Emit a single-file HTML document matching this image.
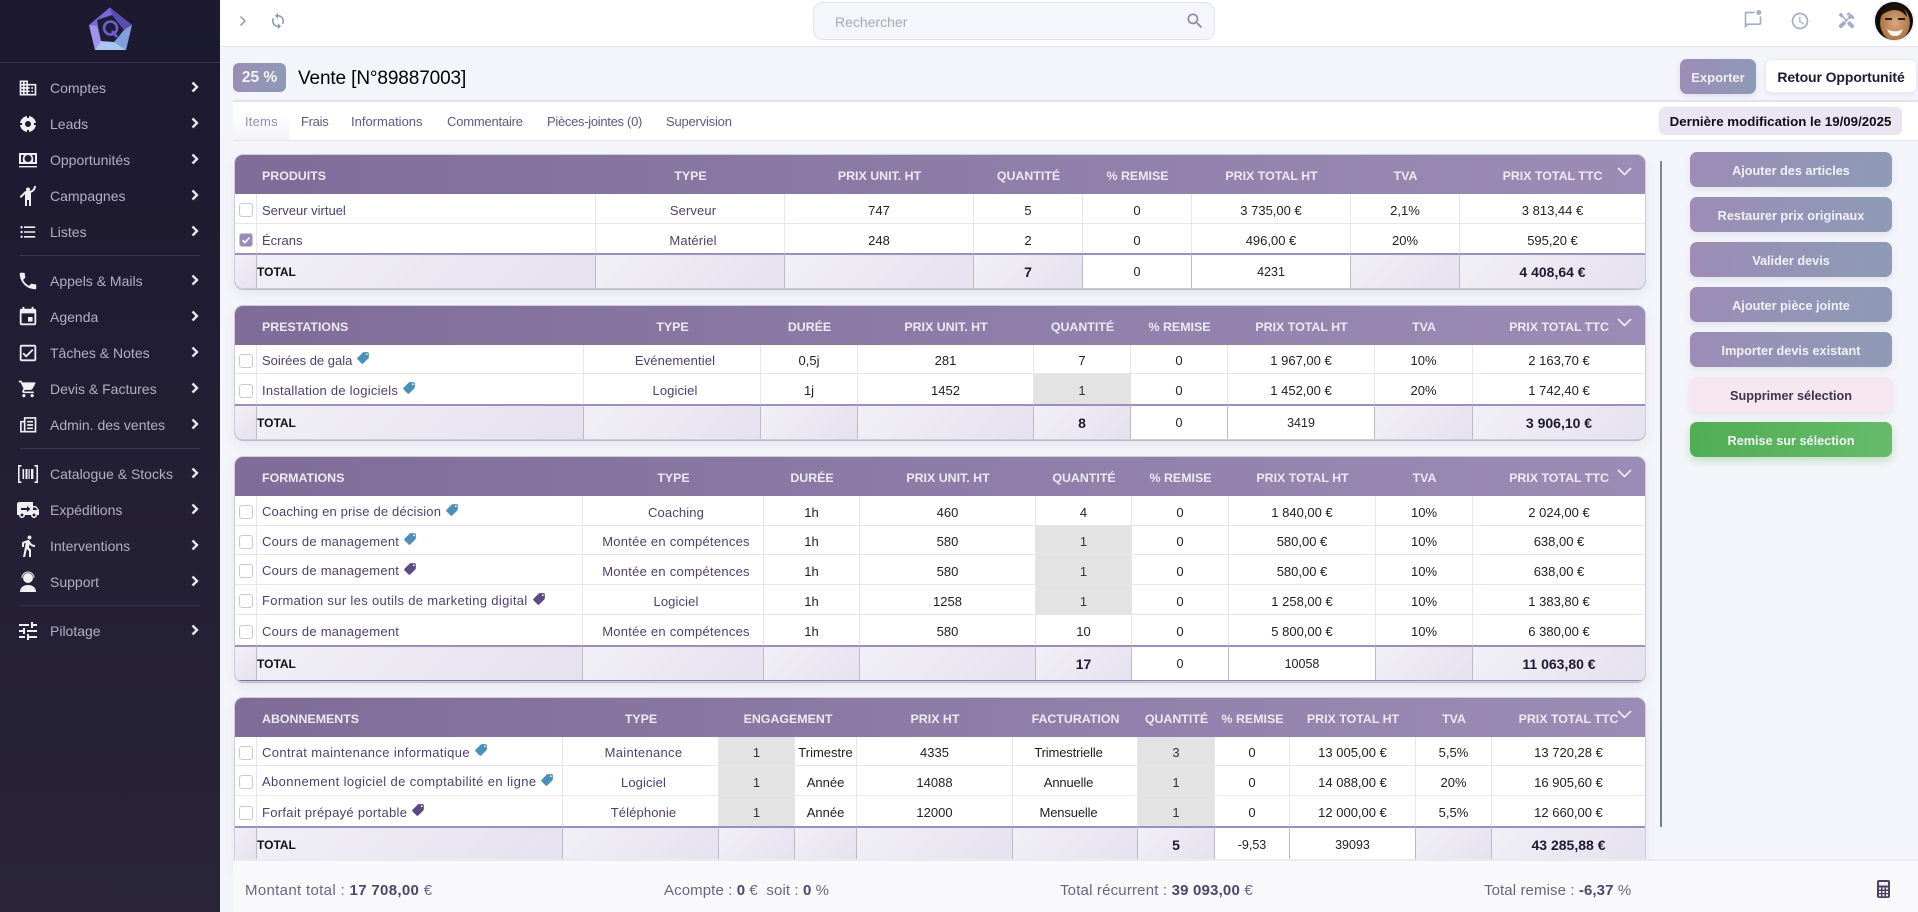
<!DOCTYPE html>
<html lang="fr"><head><meta charset="utf-8"><title>Vente</title>
<style>
*{box-sizing:border-box}
html,body{margin:0;padding:0;width:1918px;height:912px;overflow:hidden;background:#f4f5fa;font-family:"Liberation Sans",sans-serif;position:relative}
.abs{position:absolute}
#side{position:absolute;left:0;top:0;width:220px;height:912px;background:linear-gradient(180deg,#1c1930,#292439)}
.it{position:absolute;left:0;width:220px;height:24px;color:#b3b0c3;font-size:14px;line-height:24px;padding-left:50px}
.it svg.i{position:absolute;left:16px;top:0;width:24px;height:24px;fill:#eeeef3}
.it svg.c{position:absolute;left:189px;top:5px;width:12px;height:12px;fill:none;stroke:#e6e6ee;stroke-width:2.4}
.sep{position:absolute;left:20px;width:180px;height:1px;background:#3a364e}
#top{position:absolute;left:220px;top:0;width:1698px;height:47px;background:#fff;border-bottom:1.5px solid #e3e4ec}
#search{position:absolute;left:813px;top:2px;width:402px;height:38px;background:#f5f6fb;border:1px solid #e1e2ef;border-radius:10px;color:#a9a6bd;font-size:14px;line-height:38px;padding-left:21px}
.tab{position:absolute;top:113px;font-size:13px;line-height:18px;color:#5f5a80;white-space:nowrap}
.btn{position:absolute;left:1690px;width:202px;height:35px;border-radius:7px;background:linear-gradient(100deg,#9c8cb6,#8d9bb5);color:#f2f1f7;font-size:12.7px;font-weight:bold;line-height:39px;text-align:center;box-shadow:0 3px 7px rgba(90,90,140,.12)}
.card{position:absolute;left:235px;width:1410px;border-radius:8px 8px 7px 7px;overflow:hidden;background:linear-gradient(90deg,#7f6c98,#9b8cb6);box-shadow:0 0 0 1px #cfccd9}
.wrap{position:absolute;left:235px;width:1410px;border-radius:8px;box-shadow:0 5px 12px rgba(70,60,110,.09),0 1px 0 1px #c8c5d4}
table{border-collapse:separate;border-spacing:0;table-layout:fixed;width:1410px}
th{height:39px;color:#eceaf3;font-size:12.4px;font-weight:bold;text-align:center;padding:2px 0 0;white-space:nowrap}
th.f{text-align:left;padding-left:27px}
td{background:#fff;border-right:1px solid #e7e5f1;border-bottom:1px solid #e7e5f1;font-size:13px;color:#222;text-align:center;padding:3px 0 0;white-space:nowrap;overflow:visible;line-height:15px}
td:last-child{border-right:0}
tr.l td{border-bottom:0}
td.n{text-align:left;padding-left:5px;color:#4f3f6e}
td.t{color:#4f3f6e;padding-left:6px;letter-spacing:.12px}
td.g{background:#e3e3e3;color:#333}
td.k{padding:0}
td.fa{padding-right:13px;letter-spacing:-.15px}
tr.tt td{height:35px;padding:1px 0 0;border-top:2px solid #9d8fbb;border-bottom:0;border-right:1px solid #bdbbc6;background:linear-gradient(135deg,#f1eff6,#e5e1ef);font-weight:bold;color:#1d1a30;font-size:14px}
tr.tt td:last-child{border-right:0}
tr.tt td.w{background:#fff;font-weight:normal;color:#222;font-size:12.5px}
tr.tt td.L{text-align:left;font-size:12px;color:#111}
.cb{display:block;width:14px;height:14px;margin:3px 0 0 4px;background:#fff;border:1.5px solid #c9c7d1;border-radius:3px}
.cb.on{background:#9b8bb8;border-color:#c9c7d1;position:relative}
.cb.on svg{position:absolute;left:1px;top:1px;width:10px;height:10px}
.tag{width:14px;height:14px;margin-left:4px;vertical-align:middle;position:relative;top:-3px;fill:#4c90ba}
.tag.p{fill:#5d4a84}
.chev{position:absolute;left:1382px;top:12px;width:15px;height:9px;fill:none;stroke:#f1eff6;stroke-width:1.6}
#foot{position:absolute;left:233px;top:859px;width:1685px;height:53px;background:#f9f9fc;border-top:2px solid #ebe9f2;z-index:5}
.ft{position:absolute;top:871px;z-index:6;font-size:15px;line-height:40px;color:#6a6585;white-space:nowrap}
.ft b{color:#4f4568}
</style></head><body>
<svg width="0" height="0" style="position:absolute"><defs>
<symbol id="tg" viewBox="0 0 24 24"><g transform="translate(24,0) scale(-1,1)"><path d="M21.41 11.58l-9-9C12.05 2.22 11.55 2 11 2H4c-1.1 0-2 .9-2 2v7c0 .55.22 1.05.59 1.42l9 9c.36.36.86.58 1.41.58.55 0 1.05-.22 1.41-.59l7-7c.37-.36.59-.86.59-1.41 0-.55-.23-1.06-.59-1.42zM5.5 7C4.67 7 4 6.33 4 5.5S4.67 4 5.5 4 7 4.67 7 5.5 6.33 7 5.5 7z"/></g></symbol>
<symbol id="cv" viewBox="0 0 12 12"><path d="M3.5 1.5L8 6l-4.5 4.5"/></symbol>
</defs></svg>

<div id="side">
<svg class="abs" style="left:80px;top:4px" width="60" height="52" viewBox="0 0 60 52">
<polygon points="30,3.5 52,21 46,46 15,46 9,21" fill="#6a5ec4"/>
<polygon points="30,3.5 52,21 44,26 32,11" fill="#5a4db0"/>
<polygon points="30,3.5 9,21 17,22 32,11" fill="#7869d6"/>
<polygon points="9,21 15,46 21,37 17,22" fill="#a193e6"/>
<polygon points="15,46 46,46 34,38 21,37" fill="#a9c6f0"/>
<polygon points="46,46 52,21 44,26 34,38" fill="#7f9fdf"/>
<polygon points="17,16 32,11 44,26 34,38 21,37" fill="#201c36"/>
<circle cx="30.5" cy="24" r="6.5" fill="none" stroke="#6c5fd0" stroke-width="2.6"/>
<path d="M32 27l5 6" stroke="#6c5fd0" stroke-width="2.6"/>
</svg>
<div class="abs" style="left:0;top:62px;width:220px;height:1px;background:#383449"></div>

<div class="it" style="top:76px"><svg class="i" style="left:18px;top:2px;width:20px;height:20px" viewBox="0 0 24 24"><path d="M12 7V3H2v18h20V7H12zM6 19H4v-2h2v2zm0-4H4v-2h2v2zm0-4H4V9h2v2zm0-4H4V5h2v2zm4 12H8v-2h2v2zm0-4H8v-2h2v2zm0-4H8V9h2v2zm0-4H8V5h2v2zm10 12h-8v-2h2v-2h-2v-2h2v-2h-2V9h8v10zm-2-8h-2v2h2v-2zm0 4h-2v2h2v-2z"/></svg>Comptes<svg class="c"><use href="#cv"/></svg></div>
<div class="it" style="top:112px"><svg class="i" viewBox="0 0 24 24"><path fill-rule="evenodd" d="M12 4a8 8 0 1 0 0 16 8 8 0 0 0 0-16zm0 5a3 3 0 1 1 0 6 3 3 0 0 1 0-6z"/><path d="M11 4h2v2h-2zM11 18h2v2h-2zM4 11h2v2H4zM18 11h2v2h-2z" fill="#1c1930"/></svg>Leads<svg class="c"><use href="#cv"/></svg></div>
<div class="it" style="top:148px"><svg class="i" viewBox="0 0 24 24"><path fill-rule="evenodd" d="M3 5h18v11H3zM12 7a3.5 3.5 0 1 0 0 7 3.5 3.5 0 0 0 0-7zM5 7v7h2.2A8 8 0 0 1 8 7zm11 0a8 8 0 0 1 .8 7H19V7z"/><path d="M3 18h18v1.4H3z"/></svg>Opportunités<svg class="c"><use href="#cv"/></svg></div>
<div class="it" style="top:184px"><svg class="i" viewBox="0 0 24 24"><g transform="translate(24,0) scale(-1,1)"><circle cx="12" cy="5.5" r="2"/><path d="M15.89 8.11C15.5 7.72 14.83 7 13.53 7h-2.54C8.24 6.99 6 4.75 6 2H4c0 3.16 2.11 5.84 5 6.71V22h2v-6h2v6h2V10.05L18.95 14l1.41-1.41-4.47-4.48z"/></g></svg>Campagnes<svg class="c"><use href="#cv"/></svg></div>
<div class="it" style="top:220px"><svg class="i" viewBox="0 0 24 24"><path d="M4 10.5c-.83 0-1.5.67-1.5 1.5s.67 1.5 1.5 1.5 1.5-.67 1.5-1.5-.67-1.5-1.5-1.5zm0-6c-.83 0-1.5.67-1.5 1.5S3.17 7.5 4 7.5 5.5 6.83 5.5 6 4.83 4.5 4 4.5zm0 12c-.83 0-1.5.68-1.5 1.5s.68 1.5 1.5 1.5 1.5-.68 1.5-1.5-.67-1.5-1.5-1.5zM7 19h14v-2H7v2zm0-6h14v-2H7v2zm0-8v2h14V5H7z" transform="translate(2.4,2.4) scale(.8)"/></svg>Listes<svg class="c"><use href="#cv"/></svg></div>
<div class="sep" style="top:255px"></div>
<div class="it" style="top:269px"><svg class="i" style="left:17px;top:1px;width:22px;height:22px" viewBox="0 0 24 24"><path d="M6.62 10.79c1.44 2.83 3.76 5.14 6.59 6.59l2.2-2.2c.27-.27.67-.36 1.02-.24 1.12.37 2.33.57 3.57.57.55 0 1 .45 1 1V20c0 .55-.45 1-1 1-9.39 0-17-7.61-17-17 0-.55.45-1 1-1h3.5c.55 0 1 .45 1 1 0 1.25.2 2.45.57 3.57.11.35.03.74-.25 1.02l-2.2 2.2z"/></svg>Appels &amp; Mails<svg class="c"><use href="#cv"/></svg></div>
<div class="it" style="top:305px"><svg class="i" style="left:17px;top:1px;width:22px;height:22px" viewBox="0 0 24 24"><path d="M17 12h-5v5h5v-5zM16 1v2H8V1H6v2H5c-1.11 0-1.99.9-1.99 2L3 19c0 1.1.89 2 2 2h14c1.1 0 2-.9 2-2V5c0-1.1-.9-2-2-2h-1V1h-2zm3 18H5V8h14v11z"/></svg>Agenda<svg class="c"><use href="#cv"/></svg></div>
<div class="it" style="top:341px"><svg class="i" style="left:17px;top:1px;width:22px;height:22px" viewBox="0 0 24 24"><path d="M19 3H5c-1.1 0-2 .9-2 2v14c0 1.1.9 2 2 2h14c1.1 0 2-.9 2-2V5c0-1.1-.9-2-2-2zm0 16H5V5h14v14z"/><path d="M17.99 9l-1.41-1.42-6.59 6.59-2.58-2.57-1.42 1.41 4 3.99z"/></svg>Tâches &amp; Notes<svg class="c"><use href="#cv"/></svg></div>
<div class="it" style="top:377px"><svg class="i" style="left:18px;top:2px;width:20px;height:20px" viewBox="0 0 24 24"><path d="M7 18c-1.1 0-1.99.9-1.99 2S5.9 22 7 22s2-.9 2-2-.9-2-2-2zM1 2v2h2l3.6 7.59-1.35 2.45c-.16.28-.25.61-.25.96 0 1.1.9 2 2 2h12v-2H7.42c-.14 0-.25-.11-.25-.25l.03-.12.9-1.63h7.45c.75 0 1.41-.41 1.75-1.03l3.58-6.49c.08-.14.12-.31.12-.48 0-.55-.45-1-1-1H5.21l-.94-2H1zm16 16c-1.1 0-1.99.9-1.99 2s.89 2 1.99 2 2-.9 2-2-.9-2-2-2z"/></svg>Devis &amp; Factures<svg class="c"><use href="#cv"/></svg></div>
<div class="it" style="top:413px"><svg class="i" style="left:18px;top:2px;width:20px;height:20px" viewBox="0 0 24 24"><path fill-rule="evenodd" d="M7 2.5h15V21H2.5V7H7zM9 4.5V19h11V4.5zM4.5 9v10H7V9z"/><path d="M11 7h7v2h-7zM11 11h7v2h-7zM11 15h7v2h-7z"/></svg>Admin. des ventes<svg class="c"><use href="#cv"/></svg></div>
<div class="sep" style="top:448px"></div>
<div class="it" style="top:462px"><svg class="i" viewBox="0 0 24 24" style="left:15px;width:26px"><path d="M2 3h3.5v1.6H3.6v14.8h1.9V21H2zM22 3h-3.5v1.6h1.9v14.8h-1.9V21H22zM6.5 7h1.6v10H6.5zM9.5 7h2v10h-2zM12.5 7h1.2v10h-1.2zM15 7h2.4v10H15z"/></svg>Catalogue &amp; Stocks<svg class="c"><use href="#cv"/></svg></div>
<div class="it" style="top:498px"><svg class="i" viewBox="0 0 24 24"><path d="M20 8h-3V4H3c-1.1 0-2 .9-2 2v11h2c0 1.66 1.34 3 3 3s3-1.34 3-3h6c0 1.66 1.34 3 3 3s3-1.34 3-3h2v-5l-3-4zM6 18.5c-.83 0-1.5-.67-1.5-1.5s.67-1.5 1.5-1.5 1.5.67 1.5 1.5-.67 1.5-1.5 1.5zm13.5-9l1.96 2.5H17V9.5h2.5zm-1.5 9c-.83 0-1.5-.67-1.5-1.5s.67-1.5 1.5-1.5 1.5.67 1.5 1.5-.67 1.5-1.5 1.5z"/><path d="M5 10h6V8l3.5 3-3.5 3v-2H5z" fill="#1f1c31"/></svg>Expéditions<svg class="c"><use href="#cv"/></svg></div>
<div class="it" style="top:534px"><svg class="i" viewBox="0 0 24 24"><path d="M13.5 5.5c1.1 0 2-.9 2-2s-.9-2-2-2-2 .9-2 2 .9 2 2 2zM9.8 8.9L7 23h2.1l1.8-8 2.1 2v6h2v-7.5l-2.1-2 .6-3C14.8 12 16.8 13 19 13v-2c-1.9 0-3.5-1-4.3-2.4l-1-1.6c-.4-.6-1-1-1.7-1-.3 0-.5.1-.8.1L6 8.3V13h2V9.6l1.8-.7"/></svg>Interventions<svg class="c"><use href="#cv"/></svg></div>
<div class="it" style="top:570px"><svg class="i" viewBox="0 0 24 24"><circle cx="12" cy="8" r="5"/><path d="M4 22c0-4.5 3.5-7 8-7s8 2.5 8 7z"/><path d="M6 8a6 6 0 0 1 12 0" fill="none" stroke="#eeeef3" stroke-width="1"/></svg>Support<svg class="c"><use href="#cv"/></svg></div>
<div class="sep" style="top:605px"></div>
<div class="it" style="top:619px"><svg class="i" viewBox="0 0 24 24"><path d="M3 17v2h6v-2H3zM3 5v2h10V5H3zm10 16v-2h8v-2h-8v-2h-2v6h2zM7 9v2H3v2h4v2h2V9H7zm14 4v-2H11v2h10zm-6-4h2V7h4V5h-4V3h-2v6z"/></svg>Pilotage<svg class="c"><use href="#cv"/></svg></div>
</div>

<div id="top">
<svg class="abs" style="left:17px;top:15px;fill:none;stroke:#98a1b7;stroke-width:1.6" width="12" height="12"><use href="#cv"/></svg>
<svg class="abs" style="left:49px;top:12px;fill:#8d96ae" width="18" height="18" viewBox="0 0 24 24"><path d="M12 4V1L8 5l4 4V6c3.31 0 6 2.69 6 6 0 1.01-.25 1.97-.7 2.8l1.46 1.46C19.54 15.03 20 13.57 20 12c0-4.42-3.58-8-8-8zm0 14c-3.31 0-6-2.69-6-6 0-1.01.25-1.97.7-2.8L5.24 7.74C4.46 8.97 4 10.43 4 12c0 4.42 3.58 8 8 8v3l4-4-4-4v3z"/></svg>
<svg class="abs" style="left:1523px;top:10px;fill:#a3adc4" width="20" height="20" viewBox="0 0 24 24"><path d="M22 6.98V16c0 1.1-.9 2-2 2H6l-4 4V4c0-1.1.9-2 2-2h10.1c-.06.32-.1.66-.1 1s.04.68.1 1H4v12h16V7.9c.74-.15 1.42-.48 2-.92zM16 3c0 1.66 1.34 3 3 3s3-1.34 3-3-1.34-3-3-3-3 1.34-3 3z"/></svg>
<svg class="abs" style="left:1570px;top:11px;fill:#a3adc4" width="20" height="20" viewBox="0 0 24 24"><path d="M11.99 2C6.47 2 2 6.48 2 12s4.47 10 9.99 10C17.52 22 22 17.52 22 12S17.52 2 11.99 2zM12 20c-4.42 0-8-3.58-8-8s3.58-8 8-8 8 3.58 8 8-3.58 8-8 8zm.5-13H11v6l5.25 3.15.75-1.23-4.5-2.67z"/></svg>
<svg class="abs" style="left:1617px;top:11px;fill:#a3adc4" width="19" height="19" viewBox="0 0 24 24"><path d="M21.67,18.17l-5.3-5.3h-0.99l-2.54,2.54v0.99l5.3,5.3c0.39,0.39,1.02,0.39,1.41,0l2.12-2.12C22.06,19.2,22.06,18.56,21.67,18.17z M17.34,10.19l1.41-1.41l2.12,2.12c1.17-1.17,1.17-3.07,0-4.24l-3.54-3.54l-1.41,1.41V1.71L15.22,1l-3.54,3.54l0.71,0.71h2.83l-1.41,1.41l1.06,1.06l-2.89,2.89L7.85,6.48V5.06L4.83,2.04L2,4.87l3.03,3.03h1.41l4.13,4.13l-0.85,0.85H7.6l-5.3,5.3c-0.39,0.39-0.39,1.02,0,1.41l2.12,2.12c0.39,0.39,1.02,0.39,1.41,0l5.3-5.3v-2.12l5.15-5.15L17.34,10.19z"/></svg>
</div>
<div id="search" style="left:813px">Rechercher<svg class="abs" style="left:371px;top:8px;fill:#8f84a8" width="20" height="20" viewBox="0 0 24 24"><path d="M15.5 14h-.79l-.28-.27C15.41 12.59 16 11.11 16 9.5 16 5.91 13.09 3 9.5 3S3 5.91 3 9.5 5.91 16 9.5 16c1.61 0 3.09-.59 4.23-1.57l.27.28v.79l5 4.99L20.49 19l-4.99-5zm-6 0C7.01 14 5 11.99 5 9.5S7.01 5 9.5 5 14 7.01 14 9.5 11.99 14 9.5 14z"/></svg></div>

<svg class="abs" style="left:1872px;top:0" width="44" height="42" viewBox="0 0 44 42">
<defs><clipPath id="av"><circle cx="22" cy="21" r="19"/></clipPath><radialGradient id="sk" cx=".5" cy=".5" r=".6"><stop offset="0" stop-color="#d9a77c"/><stop offset=".75" stop-color="#b07a4c"/><stop offset="1" stop-color="#5f3a1d"/></radialGradient></defs>
<circle cx="22" cy="21" r="20.5" fill="#eeecf5"/>
<g clip-path="url(#av)"><rect width="44" height="42" fill="#0d0a08"/>
<ellipse cx="23" cy="23" rx="15" ry="18" fill="url(#sk)"/>
<path d="M8 17c2-9 9-13 15-13s11 5 12 13c-4-5-8-7-12-7s-11 2-15 7z" fill="#1d120b"/>
<path d="M13 19h7M26 19h7" stroke="#2b170c" stroke-width="2"/>
<path d="M15 29c5 3 11 3 16 0-2 6-5 7-8 7s-6-1-8-7z" fill="#fbf5ee"/></g></svg>

<!-- title row -->
<div class="abs" style="left:233px;top:63px;width:53px;height:29px;border-radius:6px;background:linear-gradient(100deg,#9c8cb6,#8d9bb5);color:#f4f3f8;font-size:15.5px;font-weight:bold;line-height:29px;text-align:center">25 %</div>
<div class="abs" style="left:298px;top:64px;font-size:19px;line-height:29px;color:#000;letter-spacing:-.12px;white-space:nowrap">Vente [N°89887003]</div>
<div class="abs" style="left:1680px;top:59px;width:76px;height:35px;border-radius:7px;background:linear-gradient(100deg,#9c8cb6,#8d9bb5);color:#f0eff6;font-size:13px;font-weight:bold;line-height:37px;text-align:center;box-shadow:0 2px 6px rgba(90,90,140,.15)">Exporter</div>
<div class="abs" style="left:1766px;top:60px;width:150px;height:32px;border-radius:6px;background:#fff;box-shadow:0 0 0 1px #eceaf3,0 2px 6px rgba(90,90,140,.12);color:#1d1a30;font-size:14px;font-weight:bold;line-height:34px;text-align:center;white-space:nowrap;letter-spacing:-.1px">Retour Opportunité</div>

<!-- tabs -->
<div class="abs" style="left:233px;top:100px;width:1685px;height:41px;background:#fff;border-top:2px solid #e2e3ea;border-bottom:1px solid #e4e4ee"></div>
<div class="abs" style="left:233px;top:102px;width:56px;height:38px;background:linear-gradient(180deg,#fff 30%,#f4f2f8)"></div>
<div class="tab" style="left:245px;color:#9a8cb5;letter-spacing:.2px">Items</div>
<div class="tab" style="left:301px;letter-spacing:-.3px">Frais</div>
<div class="tab" style="left:351px">Informations</div>
<div class="tab" style="left:447px;letter-spacing:-.2px">Commentaire</div>
<div class="tab" style="left:547px;letter-spacing:-.3px">Pièces-jointes (0)</div>
<div class="tab" style="left:666px;letter-spacing:-.2px">Supervision</div>
<div class="abs" style="left:1659px;top:107px;width:243px;height:28px;border-radius:6px;background:#e9e6f1;color:#0e0c1a;font-size:13.3px;font-weight:bold;line-height:30px;text-align:center;white-space:nowrap">Dernière modification le 19/09/2025</div>

<!-- Table 1 -->
<div class="wrap" style="top:155px;height:133px"></div>
<div class="card" style="top:155px;height:133px">
<table><colgroup><col style="width:22px"><col style="width:339px"><col style="width:189px"><col style="width:189px"><col style="width:109px"><col style="width:109px"><col style="width:159px"><col style="width:109px"><col style="width:185px"></colgroup>
<tr><th class="f" colspan="2">PRODUITS</th><th>TYPE</th><th>PRIX UNIT. HT</th><th>QUANTITÉ</th><th>% REMISE</th><th>PRIX TOTAL HT</th><th>TVA</th><th>PRIX TOTAL TTC</th></tr>
<tr style="height:30px"><td class="k"><span class="cb"></span></td><td class="n">Serveur virtuel</td><td class="t">Serveur</td><td>747</td><td>5</td><td>0</td><td>3 735,00 €</td><td>2,1%</td><td>3 813,44 €</td></tr>
<tr class="l" style="height:29px"><td class="k"><span class="cb on"><svg viewBox="0 0 10 10"><path d="M1.5 5.2l2.4 2.4 4.6-5" fill="none" stroke="#fff" stroke-width="1.6"/></svg></span></td><td class="n">Écrans</td><td class="t">Matériel</td><td>248</td><td>2</td><td>0</td><td>496,00 €</td><td>20%</td><td>595,20 €</td></tr>
<tr class="tt"><td></td><td class="L">TOTAL</td><td></td><td></td><td>7</td><td class="w">0</td><td class="w">4231</td><td></td><td>4 408,64 €</td></tr>
</table><svg class="chev" viewBox="0 0 15 9"><path d="M1 1l6.5 6.5L14 1"/></svg></div>

<!-- Table 2 -->
<div class="wrap" style="top:306px;height:133px"></div>
<div class="card" style="top:306px;height:133px">
<table><colgroup><col style="width:22px"><col style="width:327px"><col style="width:177px"><col style="width:97px"><col style="width:176px"><col style="width:97px"><col style="width:97px"><col style="width:147px"><col style="width:98px"><col style="width:172px"></colgroup>
<tr><th class="f" colspan="2">PRESTATIONS</th><th>TYPE</th><th>DURÉE</th><th>PRIX UNIT. HT</th><th>QUANTITÉ</th><th>% REMISE</th><th>PRIX TOTAL HT</th><th>TVA</th><th>PRIX TOTAL TTC</th></tr>
<tr style="height:29px"><td class="k"><span class="cb"></span></td><td class="n">Soirées de gala<svg class="tag"><use href="#tg"/></svg></td><td class="t">Evénementiel</td><td>0,5j</td><td>281</td><td>7</td><td>0</td><td>1 967,00 €</td><td>10%</td><td>2 163,70 €</td></tr>
<tr class="l" style="height:30px"><td class="k"><span class="cb"></span></td><td class="n" style="letter-spacing:.24px">Installation de logiciels<svg class="tag"><use href="#tg"/></svg></td><td class="t">Logiciel</td><td>1j</td><td>1452</td><td class="g">1</td><td>0</td><td>1 452,00 €</td><td>20%</td><td>1 742,40 €</td></tr>
<tr class="tt"><td></td><td class="L">TOTAL</td><td></td><td></td><td></td><td>8</td><td class="w">0</td><td class="w">3419</td><td></td><td>3 906,10 €</td></tr>
</table><svg class="chev" viewBox="0 0 15 9"><path d="M1 1l6.5 6.5L14 1"/></svg></div>

<!-- Table 3 -->
<div class="wrap" style="top:457px;height:224px"></div>
<div class="card" style="top:457px;height:224px">
<table><colgroup><col style="width:22px"><col style="width:326px"><col style="width:181px"><col style="width:96px"><col style="width:176px"><col style="width:96px"><col style="width:97px"><col style="width:147px"><col style="width:97px"><col style="width:172px"></colgroup>
<tr><th class="f" colspan="2">FORMATIONS</th><th>TYPE</th><th>DURÉE</th><th>PRIX UNIT. HT</th><th>QUANTITÉ</th><th>% REMISE</th><th>PRIX TOTAL HT</th><th>TVA</th><th>PRIX TOTAL TTC</th></tr>
<tr style="height:30px"><td class="k"><span class="cb"></span></td><td class="n" style="letter-spacing:.17px">Coaching en prise de décision<svg class="tag"><use href="#tg"/></svg></td><td class="t">Coaching</td><td>1h</td><td>460</td><td>4</td><td>0</td><td>1 840,00 €</td><td>10%</td><td>2 024,00 €</td></tr>
<tr style="height:29px"><td class="k"><span class="cb"></span></td><td class="n" style="letter-spacing:.26px">Cours de management<svg class="tag"><use href="#tg"/></svg></td><td class="t" style="letter-spacing:.25px">Montée en compétences</td><td>1h</td><td>580</td><td class="g">1</td><td>0</td><td>580,00 €</td><td>10%</td><td>638,00 €</td></tr>
<tr style="height:30px"><td class="k"><span class="cb"></span></td><td class="n" style="letter-spacing:.26px">Cours de management<svg class="tag p"><use href="#tg"/></svg></td><td class="t" style="letter-spacing:.25px">Montée en compétences</td><td>1h</td><td>580</td><td class="g">1</td><td>0</td><td>580,00 €</td><td>10%</td><td>638,00 €</td></tr>
<tr style="height:30px"><td class="k"><span class="cb"></span></td><td class="n" style="letter-spacing:.33px">Formation sur les outils de marketing digital<svg class="tag p"><use href="#tg"/></svg></td><td class="t">Logiciel</td><td>1h</td><td>1258</td><td class="g">1</td><td>0</td><td>1 258,00 €</td><td>10%</td><td>1 383,80 €</td></tr>
<tr class="l" style="height:30px"><td class="k"><span class="cb"></span></td><td class="n" style="letter-spacing:.26px">Cours de management</td><td class="t" style="letter-spacing:.25px">Montée en compétences</td><td>1h</td><td>580</td><td>10</td><td>0</td><td>5 800,00 €</td><td>10%</td><td>6 380,00 €</td></tr>
<tr class="tt"><td></td><td class="L">TOTAL</td><td></td><td></td><td></td><td>17</td><td class="w">0</td><td class="w">10058</td><td></td><td>11 063,80 €</td></tr>
</table><svg class="chev" viewBox="0 0 15 9"><path d="M1 1l6.5 6.5L14 1"/></svg></div>

<!-- Table 4 -->
<div class="wrap" style="top:698px;height:172px"></div>
<div class="card" style="top:698px;height:172px">
<table><colgroup><col style="width:22px"><col style="width:306px"><col style="width:156px"><col style="width:76px"><col style="width:62px"><col style="width:156px"><col style="width:125px"><col style="width:77px"><col style="width:75px"><col style="width:126px"><col style="width:76px"><col style="width:153px"></colgroup>
<tr><th class="f" colspan="2">ABONNEMENTS</th><th>TYPE</th><th colspan="2">ENGAGEMENT</th><th>PRIX HT</th><th>FACTURATION</th><th>QUANTITÉ</th><th>% REMISE</th><th>PRIX TOTAL HT</th><th>TVA</th><th>PRIX TOTAL TTC</th></tr>
<tr style="height:29px"><td class="k"><span class="cb"></span></td><td class="n" style="letter-spacing:.38px">Contrat maintenance informatique<svg class="tag"><use href="#tg"/></svg></td><td class="t" style="letter-spacing:.3px">Maintenance</td><td class="g">1</td><td>Trimestre</td><td>4335</td><td class="fa">Trimestrielle</td><td class="g">3</td><td>0</td><td>13 005,00 €</td><td>5,5%</td><td>13 720,28 €</td></tr>
<tr style="height:30px"><td class="k"><span class="cb"></span></td><td class="n" style="letter-spacing:.39px">Abonnement logiciel de comptabilité en ligne<svg class="tag"><use href="#tg"/></svg></td><td class="t">Logiciel</td><td class="g">1</td><td>Année</td><td>14088</td><td class="fa">Annuelle</td><td class="g">1</td><td>0</td><td>14 088,00 €</td><td>20%</td><td>16 905,60 €</td></tr>
<tr class="l" style="height:30px"><td class="k"><span class="cb"></span></td><td class="n" style="letter-spacing:.3px">Forfait prépayé portable<svg class="tag p"><use href="#tg"/></svg></td><td class="t">Téléphonie</td><td class="g">1</td><td>Année</td><td>12000</td><td class="fa">Mensuelle</td><td class="g">1</td><td>0</td><td>12 000,00 €</td><td>5,5%</td><td>12 660,00 €</td></tr>
<tr class="tt"><td></td><td class="L">TOTAL</td><td></td><td></td><td></td><td></td><td></td><td>5</td><td class="w">-9,53</td><td class="w">39093</td><td></td><td>43 285,88 €</td></tr>
</table><svg class="chev" style="top:12px" viewBox="0 0 15 9"><path d="M1 1l6.5 6.5L14 1"/></svg></div>

<!-- right column -->
<div class="abs" style="left:1660px;top:161px;width:2px;height:666px;background:linear-gradient(180deg,#86868a,#6f8584)"></div>
<div class="btn" style="top:152px">Ajouter des articles</div>
<div class="btn" style="top:197px">Restaurer prix originaux</div>
<div class="btn" style="top:242px">Valider devis</div>
<div class="btn" style="top:287px">Ajouter pièce jointe</div>
<div class="btn" style="top:332px">Importer devis existant</div>
<div class="btn" style="top:377px;background:#f5e6ef;color:#3f3350">Supprimer sélection</div>
<div class="btn" style="top:422px;background:linear-gradient(100deg,#4fae53,#66bb6a);box-shadow:0 4px 9px rgba(76,175,80,.3)">Remise sur sélection</div>

<!-- footer -->
<div id="foot"></div>
<div class="ft" style="left:245px;letter-spacing:.33px">Montant total : <b>17 708,00</b> €</div>
<div class="ft" style="left:664px;letter-spacing:.1px">Acompte : <b>0</b> € &nbsp;soit : <b>0</b> %</div>
<div class="ft" style="left:1060px;letter-spacing:.18px">Total récurrent : <b>39 093,00</b> €</div>
<div class="ft" style="left:1484px;letter-spacing:.1px">Total remise : <b>-6,37</b> %</div>
<svg class="abs" style="left:1876px;top:880px;z-index:6" width="16" height="19" viewBox="0 0 16 19"><rect x="1" y="0" width="13" height="18" rx="2" fill="#4a4460"/><rect x="3" y="2" width="9" height="3.5" fill="#f2f1f7"/><path d="M3 7.5h2v2H3zM6.5 7.5h2v2h-2zM10 7.5h2v2h-2zM3 11h2v2H3zM6.5 11h2v2h-2zM10 11h2v2h-2zM3 14.2h2v2H3zM6.5 14.2h2v2h-2zM10 14.2h2v2h-2z" fill="#f2f1f7"/></svg>
</body></html>
